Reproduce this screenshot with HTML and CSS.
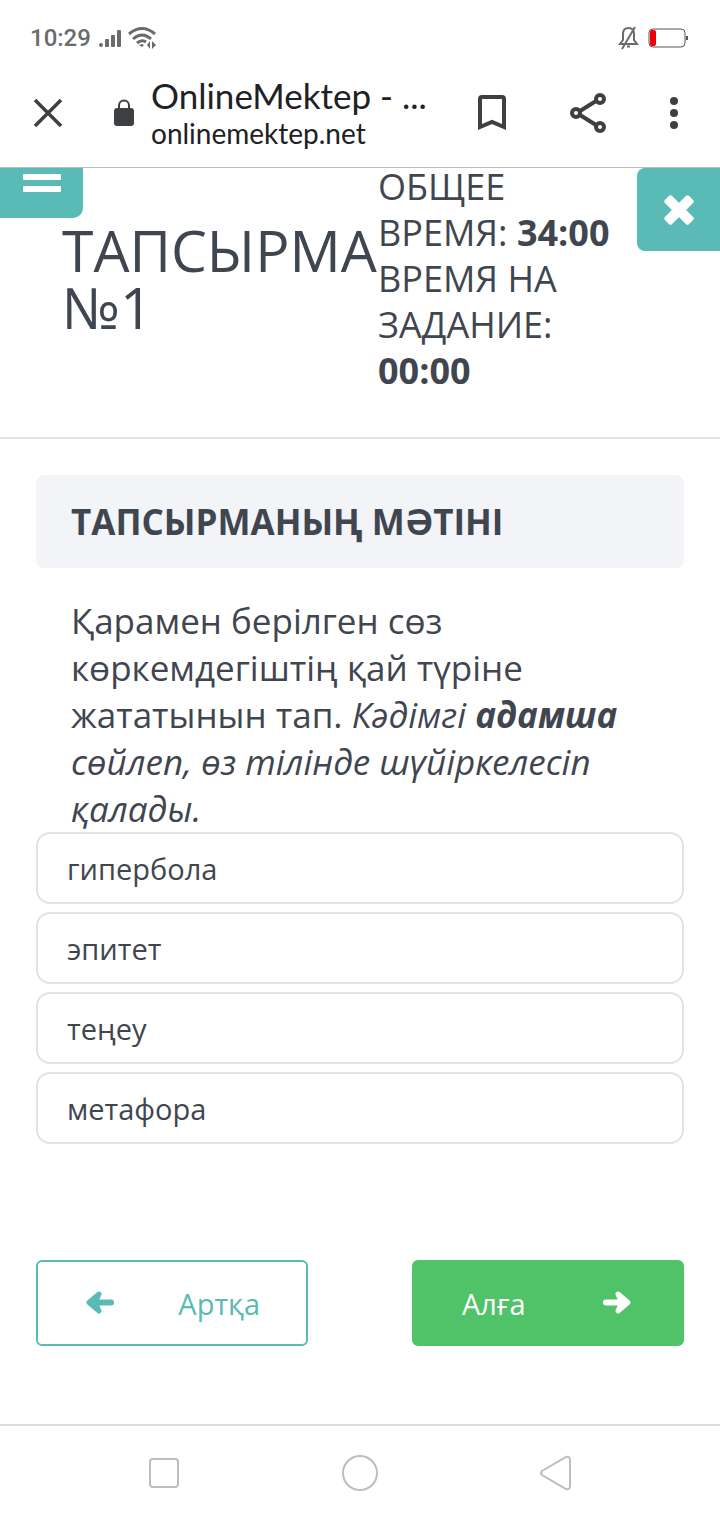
FILE: index.html
```html
<!DOCTYPE html>
<html lang="kk">
<head>
  <meta charset="utf-8">
  <meta name="viewport" content="width=device-width, initial-scale=1">
  <title>OnlineMektep</title>
  <link rel="stylesheet" href="styles.css">
</head>
<body>
  <div class="status-bar">
    <span class="clock">10:29</span>
    <svg class="signal" width="24" height="20" viewBox="0 0 24 20" fill="#6b6b6b">
      <rect x="0" y="15" width="4" height="4" rx="2"/>
      <rect x="6" y="11" width="4" height="8" rx="1"/>
      <rect x="12" y="7" width="4" height="12" rx="1"/>
      <rect x="18" y="2" width="4" height="17" rx="1"/>
    </svg>
    <svg width="30" height="24" viewBox="0 0 30 24" fill="none" stroke="#6b6b6b" stroke-width="3">
      <path d="M1 8Q14-3 27 8M5 13Q14 5 23 13M9 17Q14 13 18 16"/>
      <path d="M11 19l3-1 2 1-2 2zM19 19l3-4v8zM24 15l4 4-4 4z" fill="#6b6b6b" stroke="none"/>
    </svg>
    <svg class="bell" width="22" height="26" viewBox="0 0 22 26" fill="none" stroke="#6b6b6b" stroke-width="2">
      <path d="M2 19h17l-3-4V9c0-4-2-6-5.500-6S5 5 5 9v6zM9 21.500h3M4 24L17 2"/>
    </svg>
    <svg width="40" height="22" viewBox="0 0 40 22">
      <rect x="1" y="2" width="36" height="18" rx="4" fill="#fff" stroke="#555"/>
      <rect x="2" y="3" width="6" height="16" rx="2" fill="#f00000"/>
      <rect x="38" y="9" width="2" height="4" fill="#555"/>
    </svg>
  </div>

  <div class="browser-bar">
    <button class="icon-btn" aria-label="Close tab">
      <svg width="32" height="32" viewBox="0 0 32 32" fill="none" stroke="#3c4043" stroke-width="3.500"><path d="M3 3l26 26M29 3L3 29"/></svg>
    </button>
    <svg class="lock" width="22" height="28" viewBox="0 0 22 28">
      <rect x="1" y="9" width="20" height="18" rx="3" fill="#3c4043"/>
      <path d="M6 10V6.500a5 5 0 0 1 10 0V10" fill="none" stroke="#3c4043" stroke-width="2"/>
    </svg>
    <div class="site">
      <div class="site-title">OnlineMektep - ...</div>
      <div class="site-url">onlinemektep.net</div>
    </div>
    <button class="icon-btn bookmark" aria-label="Bookmark">
      <svg width="32" height="38" viewBox="0 0 32 38" fill="none" stroke="#3c4043" stroke-width="4"><path d="M4 33V5q0-2 2-2h20q2 0 2 2v28l-12-5z"/></svg>
    </button>
    <button class="icon-btn share" aria-label="Share">
      <svg width="40" height="42" viewBox="0 0 40 42" fill="none" stroke="#3c4043" stroke-width="4">
        <circle cx="8" cy="21" r="4"/><circle cx="32" cy="7" r="4"/><circle cx="32" cy="35" r="4"/>
        <path d="M12 19L28 9M12 23l16 10"/>
      </svg>
    </button>
    <button class="icon-btn more" aria-label="More">
      <svg width="10" height="34" viewBox="0 0 10 34" fill="#3c4043"><circle cx="5" cy="5" r="4"/><circle cx="5" cy="17" r="4"/><circle cx="5" cy="29" r="4"/></svg>
    </button>
  </div>

  <main class="viewport">
    <button class="close" aria-label="Жабу">
      <svg width="32" height="32" viewBox="0 0 32 32" fill="#fff">
        <rect x="-1" y="11" width="34" height="10" rx="2" transform="rotate(45 16 16)"/>
        <rect x="-1" y="11" width="34" height="10" rx="2" transform="rotate(-45 16 16)"/>
      </svg>
    </button>

    <div class="page">
      <button class="menu" aria-label="Мәзір">
        <svg width="38" height="32" viewBox="0 0 38 32" fill="#fff">
          <rect y="1" width="38" height="6" rx="1"/><rect y="13" width="38" height="6" rx="1"/><rect y="25" width="38" height="6" rx="1"/>
        </svg>
      </button>

      <header class="task-header">
        <h1>ТАПСЫРМА №1</h1>
        <div class="timers">
          <div>ОБЩЕЕ ВРЕМЯ: <b>34:00</b></div>
          <div>ВРЕМЯ НА ЗАДАНИЕ: <b>00:00</b></div>
        </div>
      </header>

      <section class="task">
        <h2>ТАПСЫРМАНЫҢ МӘТІНІ</h2>
        <p class="question">Қарамен берілген сөз көркемдегіштің қай түріне жататынын тап. <i>Кәдімгі <b>адамша</b> сөйлеп, өз тілінде шүйіркелесіп қалады.</i></p>

        <div class="answers">
          <button class="answer">гипербола</button>
          <button class="answer">эпитет</button>
          <button class="answer">теңеу</button>
          <button class="answer">метафора</button>
        </div>

        <div class="pager">
          <button class="btn btn-back">
            <svg width="30" height="28" viewBox="0 0 30 28" fill="currentColor" stroke="currentColor" stroke-width="5" stroke-linecap="round" stroke-linejoin="round"><path d="M13 5l-10 8.500 10 8.500-3-7v-3z"/><path d="M10 13.500h15" stroke-width="6"/></svg>
            <span>Артқа</span>
          </button>
          <button class="btn btn-next">
            <span>Алға</span>
            <svg width="30" height="28" viewBox="0 0 30 28" fill="currentColor" stroke="currentColor" stroke-width="5" stroke-linecap="round" stroke-linejoin="round"><path d="M16 5l10 8.500-10 8.500 3-7v-3z"/><path d="M19 13.500H4" stroke-width="6"/></svg>
          </button>
        </div>
      </section>
    </div>
  </main>

  <nav class="system-nav">
    <button class="icon-btn" aria-label="Recent apps">
      <svg width="38" height="38" viewBox="0 0 38 38" fill="none" stroke="#bdbdbd" stroke-width="2"><rect x="5" y="5" width="28" height="28" rx="3"/></svg>
    </button>
    <button class="icon-btn" aria-label="Home">
      <svg width="38" height="38" viewBox="0 0 38 38" fill="none" stroke="#bdbdbd" stroke-width="2"><circle cx="19" cy="19" r="17"/></svg>
    </button>
    <button class="icon-btn" aria-label="Back">
      <svg width="38" height="38" viewBox="0 0 38 38" fill="none" stroke="#bdbdbd" stroke-width="2"><path d="M5 17L29 3q4-1 4 3v26q0 4-4 3L5 21q-2-2 0-4z"/></svg>
    </button>
  </nav>
</body>
</html>
```
FILE: styles.css
```css
* {
  box-sizing: border-box;
  margin: 0;
  padding: 0;
}

body {
  display: flex;
  flex-direction: column;
  min-height: 100vh;
  background: #fff;
  color: #3f4650;
  font-family: "Open Sans", "Noto Sans", sans-serif;
}

button {
  border: 0;
  background: none;
  font: inherit;
  color: inherit;
  cursor: pointer;
}

svg {
  display: block;
  flex: none;
}

/* phone chrome */
.status-bar {
  display: flex;
  align-items: center;
  height: 76px;
  padding: 0 32px 0 30px;
}
.clock {
  color: #6b6b6b;
  font: 500 24px/28px Roboto, sans-serif;
}
.signal {
  margin: 0 5px 0 8px;
}
.bell {
  margin: 0 8px 0 auto;
}

.browser-bar {
  display: flex;
  align-items: center;
  height: 92px;
  padding: 0 41px 18px 32px;
  border-bottom: 1px solid #b9bcbd;
}
.icon-btn {
  display: flex;
}
.lock {
  margin: 0 16px 0 49px;
}
.site {
  flex: 1;
  min-width: 0;
  color: #202124;
  font-family: Lato, sans-serif;
  white-space: nowrap;
}
.site-title {
  font-size: 35px;
  line-height: 40px;
}
.site-url {
  font-size: 28px;
  line-height: 36px;
}
.share {
  margin: 0 61px 0 60px;
}

/* web page */
.viewport {
  position: relative;
  flex: 1;
  overflow: hidden;
}
.page {
  position: relative;
  margin-top: -33px;
}
.menu,
.close {
  position: absolute;
  top: 0;
  display: flex;
  align-items: center;
  justify-content: center;
  width: 83px;
  height: 83px;
  background: #5abab5;
}
.menu {
  left: 0;
  border-radius: 0 0 10px 0;
}
.close {
  right: 0;
  z-index: 1;
  border-radius: 8px 0 0 8px;
}

.task-header {
  display: flex;
  align-items: center;
  padding: 29px 106px 43px 62px;
  border-bottom: 2px solid #e4e5e7;
}
.task-header h1 {
  flex: none;
  width: 316px;
  font-size: 57px;
  font-weight: 400;
  line-height: 57px;
}
.timers {
  flex: 1;
  font-size: 36px;
  line-height: 46px;
}

.task {
  padding: 36px;
}
.task h2 {
  padding: 24px 35px;
  border-radius: 8px;
  background: #f3f4f8;
  font-size: 35px;
  line-height: 45px;
}
.question {
  padding: 29px 35px 0;
  font-size: 35px;
  line-height: 47px;
}
.answers {
  display: grid;
  gap: 8px;
}
.answer {
  height: 72px;
  padding: 0 29px;
  border: 2px solid #e2e2e3;
  border-radius: 14px;
  font-size: 29px;
  text-align: left;
}

.pager {
  display: flex;
  justify-content: space-between;
  margin-top: 116px;
}
.btn {
  display: flex;
  align-items: center;
  justify-content: space-between;
  width: 272px;
  height: 86px;
  padding: 0 46px 0 48px;
  border: 2px solid #5abab5;
  border-radius: 6px;
  font-size: 29px;
}
.btn-back {
  color: #5abab5;
}
.btn-next {
  padding-right: 50px;
  border-color: #50c268;
  background: #50c268;
  color: #fff;
}

.system-nav {
  display: flex;
  align-items: center;
  justify-content: space-between;
  height: 96px;
  padding: 0 145px;
  border-top: 2px solid #dcdcdc;
}
```
